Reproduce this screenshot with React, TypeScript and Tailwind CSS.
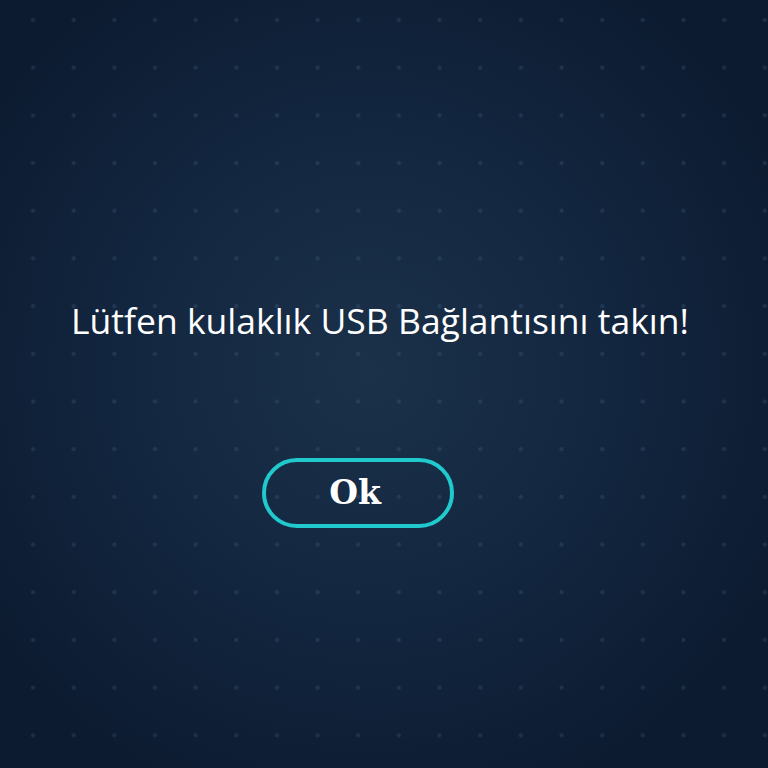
import React from 'react'

export default function App() {
  return (
    <div className="relative h-[768px] w-[768px] overflow-hidden bg-[#0c1a2e] bg-[radial-gradient(circle,rgba(110,150,195,0.16)_1.6px,transparent_2.6px),radial-gradient(ellipse_60%_60%_at_48%_48%,#1b3049_0%,#142842_45%,#0c1b30_100%)] [background-size:40.67px_47.7px,100%_100%] [background-position:12.7px_-3.85px,0_0]">
      <div className="flex flex-col items-center pt-[296px]">
        <h1 className="mr-[8px] whitespace-nowrap font-['Open_Sans',sans-serif] text-[35.5px] font-normal leading-[48px] text-white">
          Lütfen kulaklık USB Bağlantısını takın!
        </h1>
        <button
          type="button"
          className="mt-[114px] mr-[52px] flex h-[70px] w-[192px] items-center justify-center rounded-full border-[4px] border-[#20c9cc] bg-transparent pr-[6px] font-['DejaVu_Serif',serif] text-[33px] font-bold text-white"
        >
          Ok
        </button>
      </div>
    </div>
  )
}
